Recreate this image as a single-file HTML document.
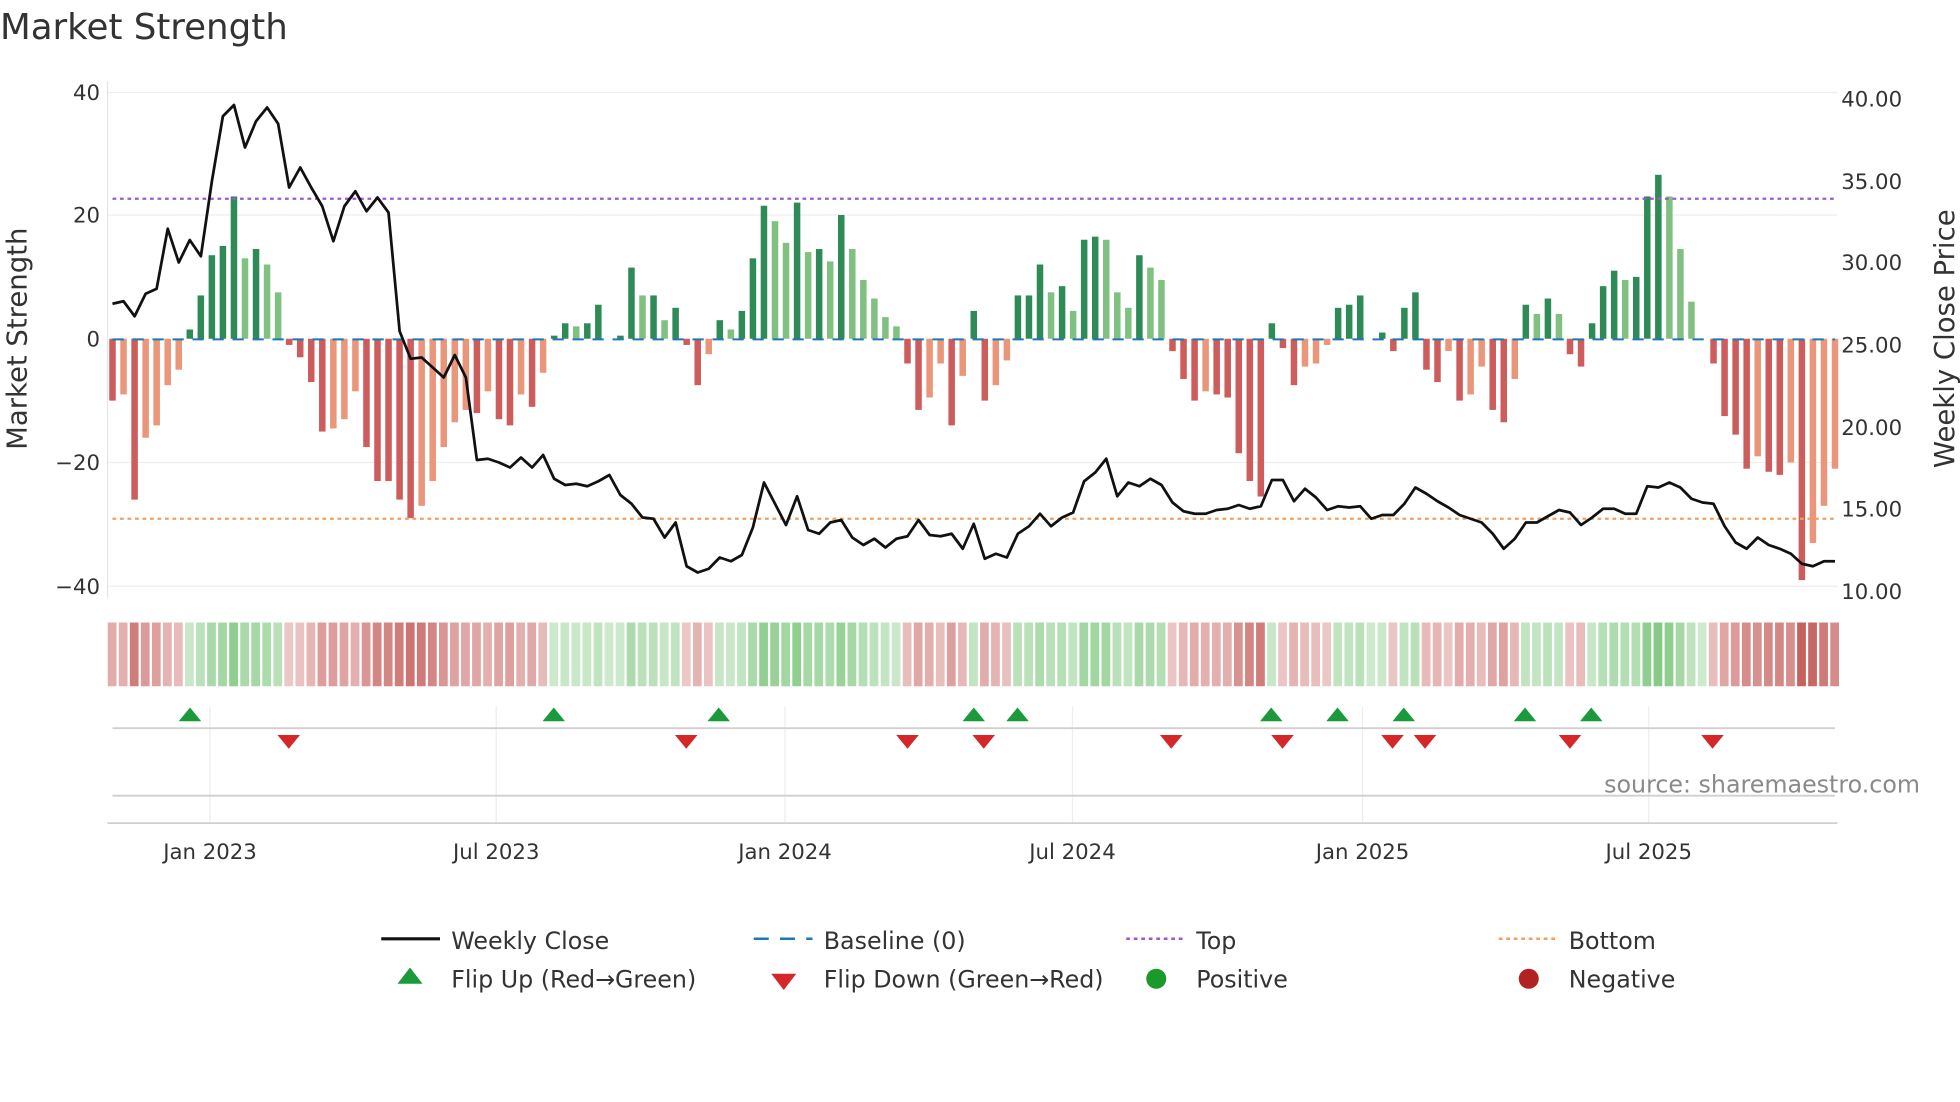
<!DOCTYPE html>
<html><head><meta charset="utf-8"><style>
html,body{margin:0;padding:0;background:#fff;}
svg{display:block;font-family:"DejaVu Sans","Liberation Sans",sans-serif;}
</style></head><body>
<svg id="s" width="1960" height="1102" viewBox="0 0 1568 881.6" xmlns="http://www.w3.org/2000/svg">
<rect width="1568" height="882" fill="#fff"/>
<text x="0" y="31" font-size="28.5" fill="#333">Market Strength</text>
<g id="grid" stroke="#eeeeee" stroke-width="1">
<line x1="86" x2="1470" y1="74" y2="74"/><line x1="86" x2="1470" y1="172" y2="172"/>
<line x1="86" x2="1470" y1="370" y2="370"/><line x1="86" x2="1470" y1="469" y2="469"/>
</g>
<line x1="86" x2="86" y1="65" y2="478" stroke="#e5e5e5"/>
<g id="bars"></g>
<line x1="90" x2="1468" y1="271.5" y2="271.5" stroke="#1f77b4" stroke-width="1.6" stroke-dasharray="9,7"/>
<line x1="90" x2="1468" y1="159" y2="159" stroke="#9b59d6" stroke-width="1.8" stroke-dasharray="3,3"/>
<line x1="90" x2="1468" y1="415" y2="415" stroke="#f0a060" stroke-width="1.8" stroke-dasharray="3,3"/>
<polyline id="price" fill="none" stroke="#111" stroke-width="2.2" stroke-linejoin="round"/>
<g font-size="17" fill="#333">
<text x="80" y="80" text-anchor="end">40</text><text x="80" y="178" text-anchor="end">20</text>
<text x="80" y="277" text-anchor="end">0</text><text x="80" y="376" text-anchor="end">−20</text>
<text x="80" y="475" text-anchor="end">−40</text>
<text x="1473" y="85">40.00</text><text x="1473" y="151">35.00</text><text x="1473" y="216">30.00</text>
<text x="1473" y="282">25.00</text><text x="1473" y="348">20.00</text><text x="1473" y="413">15.00</text>
<text x="1473" y="479">10.00</text>
</g>
<text transform="translate(21,271) rotate(-90)" font-size="22" fill="#333" text-anchor="middle">Market Strength</text>
<text transform="translate(1563,271) rotate(-90)" font-size="22" fill="#333" text-anchor="middle">Weekly Close Price</text>
<g id="strip"></g>
<g stroke="#eeeeee"><line x1="168" x2="168" y1="565" y2="658"/><line x1="397" x2="397" y1="565" y2="658"/><line x1="628" x2="628" y1="565" y2="658"/><line x1="858" x2="858" y1="565" y2="658"/><line x1="1090" x2="1090" y1="565" y2="658"/><line x1="1319" x2="1319" y1="565" y2="658"/></g>
<line x1="90" x2="1468" y1="582.5" y2="582.5" stroke="#d0d0d0" stroke-width="1.5"/>
<line x1="90" x2="1468" y1="636.5" y2="636.5" stroke="#d0d0d0" stroke-width="1.5"/>
<line x1="86" x2="1470" y1="658.5" y2="658.5" stroke="#c8c8c8" stroke-width="1.2"/>
<g id="flips"></g>
<text x="1536" y="634" font-size="19" fill="#8a8a8a" text-anchor="end">source: sharemaestro.com</text>
<g font-size="17" fill="#333" text-anchor="middle">
<text x="168" y="687">Jan 2023</text><text x="397" y="687">Jul 2023</text><text x="628" y="687">Jan 2024</text>
<text x="858" y="687">Jul 2024</text><text x="1090" y="687">Jan 2025</text><text x="1319" y="687">Jul 2025</text>
</g>
<g font-size="19" fill="#333">
<line x1="305" x2="352" y1="751" y2="751" stroke="#111" stroke-width="2.5"/><text x="361" y="759">Weekly Close</text>
<line x1="603" x2="650" y1="751" y2="751" stroke="#1f77b4" stroke-width="2" stroke-dasharray="12,9"/><text x="659" y="759">Baseline (0)</text>
<line x1="901" x2="946" y1="751" y2="751" stroke="#9b59d6" stroke-width="2" stroke-dasharray="3,3"/><text x="957" y="759">Top</text>
<line x1="1199" x2="1244" y1="751" y2="751" stroke="#f0a060" stroke-width="2" stroke-dasharray="3,3"/><text x="1255" y="759">Bottom</text>
<polygon points="328,774 338,787 318,787" fill="#1a9a3a"/><text x="361" y="790">Flip Up (Red→Green)</text>
<polygon points="617,779 637,779 627,792" fill="#d62728"/><text x="659" y="790">Flip Down (Green→Red)</text>
<circle cx="925" cy="783" r="8" fill="#1a9a2a"/><text x="957" y="790">Positive</text>
<circle cx="1223" cy="783" r="8" fill="#b22222"/><text x="1255" y="790">Negative</text>
</g>
</svg>
<script>
var v=[-10,-9,-26,-16,-14,-7.5,-5,1.5,7,13.5,15,23,13,14.5,12,7.5,-1,-3,-7,-15,-14.5,-13,-8.5,-17.5,-23,-23,-26,-29,-27,-23,-17.5,-13.5,-11.5,-12,-8.5,-13,-14,-9,-11,-5.5,0.5,2.5,2,2.5,5.5,0,0.5,11.5,7,7,3,5,-1,-7.5,-2.5,3,1.5,4.5,13,21.5,19,15.5,22,14,14.5,12.5,20,14.5,9.5,6.5,3.5,2,-4,-11.5,-9.5,-4,-14,-6,4.5,-10,-7.5,-3.5,7,7,12,7.5,8.5,4.5,16,16.5,16,7.5,5,13.5,11.5,9.5,-2,-6.5,-10,-8.5,-9,-9.5,-18.5,-23,-25.5,2.5,-1.5,-7.5,-4.5,-4,-1,5,5.5,7,0,1,-2,5,7.5,-5,-7,-2,-10,-9,-4.5,-11.5,-13.5,-6.5,5.5,4,6.5,4,-2.5,-4.5,2.5,8.5,11,9.5,10,23,26.5,23,14.5,6,0,-4,-12.5,-15.5,-21,-19,-21.5,-22,-20,-39,-33,-27,-21];
var p=[243,241,253,235,231,183,210,192,205,145,93,84,118,97,86,99,150,134,150,165,193,165,153,169,158,170,265,287,286,294,302,284,302,368,367,370,374,366,374,364,383,388,387,389,385,380,396,403,414,415,430,418,453,458,455,446,449,444,422,386,403,420,397,424,427,418,416,430,436,431,438,431,429,416,428,429,427,439,419,447,443,446,427,421,411,421,414,410,385,378,367,397,386,389,383,388,402,409,411,411,408,407,404,407,405,384,384,401,391,398,408,405,406,405,415,412,412,403,390,395,401,406,412,415,418,427,439,431,418,418,413,408,410,420,414,407,407,411,411,389,390,386,390,399,402,403,421,434,439,430,436,439,443,451,453,449,449];
var NS="http://www.w3.org/2000/svg";
function el(t,a,par){var e=document.createElementNS(NS,t);for(var k in a)e.setAttribute(k,a[k]);par.appendChild(e);return e;}
var n=v.length,x0=90,x1=1468,dx=(x1-x0)/(n-1);
var bars=document.getElementById('bars'),strip=document.getElementById('strip');
for(var i=0;i<n;i++){var x=x0+i*dx,val=v[i],prev=i?v[i-1]:0;
var dark=Math.abs(val)>=Math.abs(prev)&&(val*prev>=0||i==0)||val*prev<0;
var c=val>=0?(dark?'#2e8b57':'#80c080'):(dark?'#cd5c5c':'#e9967a');
var h=Math.abs(val)*4.95,y=val>=0?271-h:271;
if(h>0.5)el('rect',{x:x-2.6,y:y,width:5.2,height:h,fill:c},bars);
var a=0.3+0.6*Math.min(Math.abs(val),35)/35;
el('rect',{x:x-3.8,y:498,width:7,height:51,fill:val>=0?'#5cb85c':'#c0504d','fill-opacity':a.toFixed(2)},strip);}
var pts=[];for(var i=0;i<p.length;i++){pts.push((x0+i*(x1-x0)/(p.length-1)).toFixed(1)+','+p[i]);}
document.getElementById('price').setAttribute('points',pts.join(' '));
var f=document.getElementById('flips');
[152,443,575,779,814,1017,1070,1123,1220,1273].forEach(function(x){el('polygon',{points:x+',566 '+(x+9)+',577 '+(x-9)+',577',fill:'#1a9a3a'},f);});
[231,549,726,787,937,1026,1114,1140,1256,1370].forEach(function(x){el('polygon',{points:(x-9)+',588 '+(x+9)+',588 '+x+',599',fill:'#d62728'},f);});
</script>
</body></html>
